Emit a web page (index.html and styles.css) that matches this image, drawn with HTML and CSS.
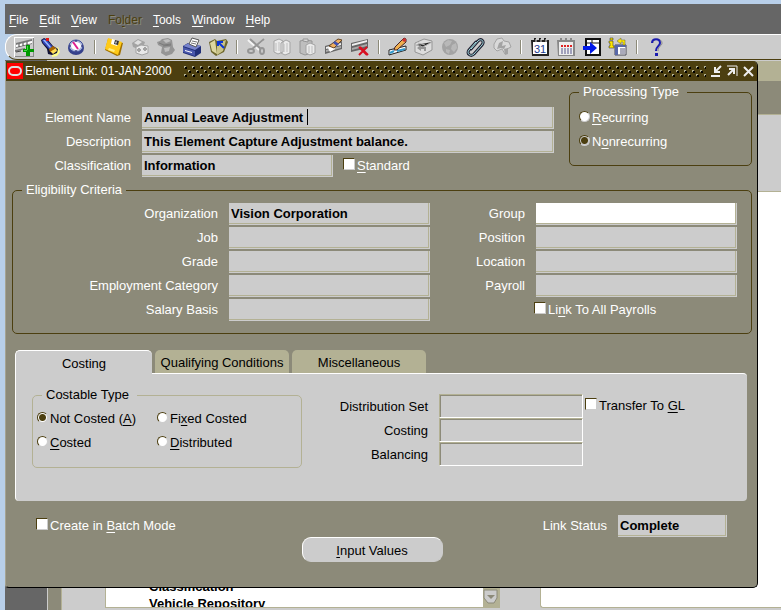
FILE: index.html
```html
<!DOCTYPE html>
<html lang="en">
<head>
<meta charset="utf-8">
<title>Element Link</title>
<link rel="stylesheet" href="styles.css">
</head>
<body>
<div class="app">
  <nav class="menubar">
    <a href="#"><u>F</u>ile</a>
    <a href="#"><u>E</u>dit</a>
    <a href="#"><u>V</u>iew</a>
    <a href="#" class="disabled">Fo<u>l</u>der</a>
    <a href="#"><u>T</u>ools</a>
    <a href="#"><u>W</u>indow</a>
    <a href="#"><u>H</u>elp</a>
  </nav>

  <div class="toolbar">
    <button type="button" aria-label="New" class="raised"><svg viewBox="0 0 20 20"><path fill="#777" d="M2 6 18 2v2L2 8zM2 10l16-4v1L2 11zM1 13l10-2v1L1 15z"/><path fill="#fff" d="M2 8 18 4v2L2 10z"/><path stroke="#444" fill="none" d="M5 7v3M9 6v3M13 5v3M2 15l5-1"/><path fill="#090" d="M12 8h4v4h4v3h-4v4h-4v-4H9v-3h3z"/><path fill="#4d4" d="M13 9h1v4h-4v1h3z"/></svg></button>
    <button type="button" aria-label="Find"><svg viewBox="0 0 20 20"><path fill="#ffff8a" d="M12 15l6-5 2 5-3 4-5 1z"/><path fill="#113" d="M1 3l3-2 4 2 5 6 5 3-1 4-5 2-4-1-1-5-5-6z"/><path fill="#3648b8" d="M2 3l2-1 3 1 6 7-3 3-7-7z"/><path fill="#9bf" d="M3 3h2l6 7-1 1z"/><path fill="#e01818" d="M6 1h3v3H6z"/><path fill="#fd5" d="M10 14l6-3 1 3-4 3z"/><path fill="#a60" d="M9 12l4-3 3 2-6 4z"/></svg></button>
    <button type="button" aria-label="Navigator"><svg viewBox="0 0 20 20"><ellipse cx="10" cy="11" rx="8" ry="7" fill="#35408a"/><ellipse cx="10" cy="9" rx="7" ry="6" fill="#a9b4d8" stroke="#3a4a9a"/><ellipse cx="10" cy="9" rx="5" ry="4" fill="#fff"/><path d="M7 5l5 7" stroke="#e02090" stroke-width="2"/><path d="M3 9h2M15 9h2M10 3v2M10 13v2" stroke="#226"/></svg></button>
    <span class="sep"></span>
    <button type="button" aria-label="Save"><svg viewBox="0 0 20 20"><path fill="#a07000" d="M4 2l15 4-3 12-3 1L1 13z"/><path fill="#ffca18" d="M4 1l14 4-4 13L1 12z"/><path fill="#fff" d="M8 2l7 2-2 5-6-2z"/><path fill="#333" d="M11 3l4 1-1 4-4-1z"/><path fill="#ccc" d="M12 4l1 1-1 2-1-1z"/><path fill="#ffed80" d="M5 11l6 2-1 2-6-2z"/></svg></button>
    <button type="button" aria-label="Next step" disabled><svg viewBox="0 0 20 20"><path fill="#999" d="M2 6l6-4 7 3-1 3-6 4-5-2z"/><path fill="#e4e4e4" d="M4 6l4-3 4 2-4 3z"/><path fill="#f0f0f0" stroke="#999" d="M6 10l5-2 7 1v7l-6 2-6-2z"/><path stroke="#999" stroke-width="2" d="M9 11v4M7 13h4M15 10v4M13 12h4"/></svg></button>
    <button type="button" aria-label="Switch responsibility" disabled><svg viewBox="0 0 20 20"><path fill="#888" d="M1 5l3-1 2-2 6-1 4 2 1 7 2 3-3 4-6 2-5-3 1-6-4-2z"/><path fill="#bbb" d="M7 3l5-1 3 2-5 2zM8 11l6-1-1 4-4 1z"/><path stroke="#666" fill="none" d="M3 6l5 2 7-1M7 9l8-1"/></svg></button>
    <button type="button" aria-label="Print"><svg viewBox="0 0 20 20"><path fill="#223078" d="M1 9l5-3 13 3v7l-6 4L1 16z"/><path fill="#7884cc" d="M1 9l6-3 12 3-6 4z"/><path fill="#4a58ac" d="M1 10l12 4v5L1 15z"/><path fill="#fff" stroke="#555" d="M7 7l3-6 7 2-3 7z"/><path d="M10 4l5 1M9 6l5 1" stroke="#777"/><path fill="#fff" d="M3 13l7 2v1l-7-2z"/></svg></button>
    <button type="button" aria-label="Close form"><svg viewBox="0 0 20 20"><path fill="#6d662c" d="M1 5l6-3 2 2 9-2 2 3-4 10-8 4-5-4z"/><path fill="#ddd7a0" d="M2 6l5-3 2 14-5-3z"/><path fill="#c9c38a" d="M9 6l9-3-3 11-6 4z"/><path stroke="#0b35d5" stroke-width="2" fill="none" d="M16 11l-5-5M10 9V5h5"/></svg></button>
    <span class="sep"></span>
    <button type="button" aria-label="Cut" disabled><svg viewBox="0 0 20 20"><path stroke="#fff" stroke-width="2" fill="none" d="M2 3l11 10M17 3L6 12"/><path stroke="#888" stroke-width="2" fill="none" d="M4 2l11 10M18 2L6 12"/><g fill="none" stroke="#888" stroke-width="2"><ellipse cx="5" cy="14" rx="3" ry="2"/><ellipse cx="16" cy="14" rx="2" ry="3"/></g></svg></button>
    <button type="button" aria-label="Copy" disabled><svg viewBox="0 0 20 20"><path fill="#f2f2f2" stroke="#999" d="M2 4l5-2 4 2v11l-5 2-4-2zM9 6l5-3 4 2v11l-5 2-4-2z"/><path stroke="#bbb" d="M4 6v8M7 5v9M12 7v8M15 6v9"/></svg></button>
    <button type="button" aria-label="Paste" disabled><svg viewBox="0 0 20 20"><path fill="#bbb" stroke="#888" d="M2 4l5-1 7 1v12l-7 2-5-2z"/><path fill="#ddd" stroke="#888" d="M5 4V2h5v3z"/><path fill="#f2f2f2" stroke="#999" d="M8 8l4-2 5 2v8l-5 2-4-2z"/><path stroke="#bbb" d="M11 9v7M14 9v7"/></svg></button>
    <button type="button" aria-label="Clear record"><svg viewBox="0 0 20 20"><path fill="#666" d="M1 9L18 4v8L1 17z"/><path fill="#eee" d="M2 10l15-4v2L2 12z"/><path fill="#aaa" d="M2 13l15-4v2L2 15z"/><path fill="#fff" d="M4 11l5-2 2 3-5 3z"/><path fill="#f0b060" stroke="#642" d="M5 9l9-7 4 1-8 8z"/><path fill="#4050b0" d="M9 6l4 3 2-2-4-3z"/></svg></button>
    <button type="button" aria-label="Delete record"><svg viewBox="0 0 20 20"><path fill="#666" d="M1 6L18 2v9L1 15z"/><path fill="#eee" d="M2 7l15-4v2L2 9z"/><path fill="#aaa" d="M2 11l15-4v2L2 13z"/><path stroke="#d81020" stroke-width="2" d="M9 10l8 8M17 10l-8 8M10 10l8 8"/></svg></button>
    <span class="sep"></span>
    <button type="button" aria-label="Edit field"><svg viewBox="0 0 20 20"><path fill="#fff" stroke="#222" d="M1 13l17-4v4L1 18z"/><path stroke="#39c" stroke-width="2" d="M2 16l4-2M9 14l8-2"/><path fill="#f0b050" stroke="#422" d="M6 13l1-3 9-9 2 1v3l-9 8z"/><path fill="#c33" d="M14 3l2-2 2 1v2l-2 1z"/></svg></button>
    <button type="button" aria-label="Zoom" disabled><svg viewBox="0 0 20 20"><path fill="#e2e2e2" stroke="#888" d="M1 6l9-4 8 2v9l-9 5-8-3z"/><path stroke="#aaa" d="M2 8l7 2 9-5M4 6l7 2"/><path fill="#888" d="M3 11l4-3v2h5v4h-2v-2H7v2z"/></svg></button>
    <button type="button" aria-label="Translations" disabled><svg viewBox="0 0 20 20"><circle cx="10" cy="10" r="8" fill="#999"/><path fill="#b4b4b4" d="M4 6l4-3 4 1-2 4-4 2zM12 8l4-2 1 5-3 4-3-3zM6 12l4 1-1 4-3-2z"/></svg></button>
    <button type="button" aria-label="Attachments"><svg viewBox="0 0 20 20"><path fill="none" stroke="#223" stroke-width="3" stroke-linecap="round" d="M5 12l7-8c3-3 7 0 4 4l-8 9c-3 3-8 0-5-4l7-8"/><path fill="none" stroke="#a4dce0" d="M5 12l7-8c3-3 7 0 4 4l-8 9c-3 3-8 0-5-4l7-8"/></svg></button>
    <button type="button" aria-label="Folder tools" disabled><svg viewBox="0 0 20 20"><path fill="#ddd" stroke="#999" d="M2 7l3-5 5-1 2 3 5 1 2 5-4 2-2 5-3-5-5 2-3-3z"/><path fill="#999" d="M7 6l4-2-1 5 4-1-2 4-3-1-4 1zM12 12l4-1v6l-3 1z"/></svg></button>
    <span class="sep"></span>
    <button type="button" aria-label="Calendar"><svg viewBox="0 0 20 20"><path fill="#222" d="M1 3h18v16H2z"/><path fill="#fff" d="M3 5h14v12H3z"/><path fill="none" stroke="#222" stroke-width="2" d="M5 1v4M10 1v4M15 1v4"/><path fill="none" stroke="#ddd" d="M6 2v3M11 2v3M16 2v3"/><text x="4" y="16" class="day">31</text></svg></button>
    <button type="button" aria-label="Schedule"><svg viewBox="0 0 20 20"><path fill="#888" d="M1 3h18v16H2z"/><path fill="#eee" d="M3 5h14v13H3z"/><path fill="none" stroke="#888" stroke-width="2" d="M5 1v4M10 1v4M15 1v4"/><path stroke="#d22" stroke-width="2" stroke-dasharray="2 1" d="M5 9h11"/><path stroke="#558" stroke-dasharray="2 1" d="M5 12h11M5 14h11M5 16h11"/></svg></button>
    <button type="button" aria-label="Export"><svg viewBox="0 0 20 20"><path fill="#fff" stroke="#111" stroke-width="2" d="M4 2h14v16H4z"/><path stroke="#111" d="M4 6h14M10 2v4"/><path fill="#0018e8" d="M1 9h7V5l7 6-7 6v-4H1z"/></svg></button>
    <button type="button" aria-label="Personal actions"><svg viewBox="0 0 20 20"><path fill="#fff" stroke="#445" d="M7 8h11v10H7z"/><path fill="#5868a8" d="M7 8h11v2H7zM7 10h3v8H7z"/><path stroke="#557" d="M12 12h5M12 14h5M12 16h5"/><path fill="#ffe800" stroke="#222" stroke-width=".5" d="M2 1h3v2H2zM1 4h4v5h1v2H1V9h1V6H1z"/><path fill="#ffe800" stroke="#663" stroke-width=".5" d="M9 4l4-3v2h4v5h-2V5h-2v2z"/></svg></button>
    <span class="sep"></span>
    <button type="button" aria-label="Help"><svg viewBox="0 0 20 20"><path fill="none" stroke="#888" d="M7 6c0-5 9-5 9 0 0 3-4 3-4 8"/><path fill="none" stroke="#1c1cb0" stroke-width="2" d="M6 6c0-5 8-5 8 0 0 3-4 3-4 8"/><path fill="#1c1cb0" d="M9 16h3v3H9z"/></svg></button>
  </div>

  <main class="desktop">
    <section class="behind" aria-label="Background form">
      <div class="behind-title"></div>
      <div class="behind-band"></div>
      <div class="behind-head"></div>
      <div class="behind-body">
        <div class="list"><ul><li>Classification</li><li>Vehicle Repository</li></ul>
          <button type="button" class="scroll" aria-label="Scroll down"><svg viewBox="0 0 16 20"><path fill="#ccc" stroke="#8c8a79" d="M1 3h13v8l-3 5H5l-4-5z"/><path fill="#8c8a79" d="M4 8h8l-4 4z"/></svg></button>
        </div>
        <div class="page"></div>
      </div>
    </section>

    <form class="dialog">
      <header class="titlebar">
        <svg class="logo" viewBox="0 0 16 16"><path fill="#f00" d="M0 0h16v16H0z"/><rect x="2" y="4" width="12" height="8" rx="4" fill="none" stroke="#ddd" stroke-width="2"/></svg>
        <h1>Element Link: 01-JAN-2000</h1>
        <svg class="grip"><defs><pattern id="dots" width="8" height="8" patternUnits="userSpaceOnUse"><path fill="#000" d="M1 1h2v2H1zM5 5h2v2H5z"/><path fill="#b3b194" d="M0 0h2v1H1v1H0zM4 4h2v1H5v1H4z"/></pattern></defs><rect width="100%" height="12" fill="url(#dots)"/></svg>
        <button type="button" aria-label="Minimize"><svg viewBox="0 0 12 12"><path fill="none" stroke="#eee" stroke-width="2" d="M1 11h9M11 1L6 6M5 2v5h5"/></svg></button>
        <button type="button" aria-label="Restore"><svg viewBox="0 0 12 12"><path fill="none" stroke="#eee" stroke-width="1" d="M1 1h10v10"/><path fill="none" stroke="#eee" stroke-width="2" d="M2 10l5-5M3 4h5v5"/></svg></button>
        <button type="button" aria-label="Close"><svg viewBox="0 0 12 12"><path stroke="#eee" stroke-width="2" d="M2 2l9 9M11 2l-9 9"/></svg></button>
      </header>

      <div class="content">
        <div class="top">
          <div class="form main-form">
            <label for="name">Element Name</label>
            <div class="editing"><input type="text" id="name" value="Annual Leave Adjustment"><i class="caret"></i></div>
            <label for="desc">Description</label>
            <input type="text" id="desc" value="This Element Capture Adjustment balance.">
            <label for="class">Classification</label>
            <div class="pair">
              <input type="text" id="class" value="Information">
              <label class="check"><input type="checkbox"><span><u>S</u>tandard</span></label>
            </div>
          </div>
          <fieldset class="processing">
            <legend>Processing Type</legend>
            <label class="check"><input type="radio" name="ptype"><span><u>R</u>ecurring</span></label>
            <label class="check"><input type="radio" name="ptype" checked><span>N<u>o</u>nrecurring</span></label>
          </fieldset>
        </div>

        <fieldset class="eligibility">
          <legend>Eligibility Criteria</legend>
          <div class="form left">
            <label for="org">Organization</label><input type="text" id="org" value="Vision Corporation">
            <label for="job">Job</label><input type="text" id="job">
            <label for="grade">Grade</label><input type="text" id="grade">
            <label for="cat">Employment Category</label><input type="text" id="cat">
            <label for="basis">Salary Basis</label><input type="text" id="basis">
          </div>
          <div class="form right">
            <label for="group">Group</label><input type="text" id="group" class="enabled">
            <label for="pos">Position</label><input type="text" id="pos">
            <label for="loc">Location</label><input type="text" id="loc">
            <label for="pay">Payroll</label><input type="text" id="pay">
            <label class="check wide"><input type="checkbox"><span>Li<u>n</u>k To All Payrolls</span></label>
          </div>
        </fieldset>

        <div class="tabs" role="tablist">
          <button type="button" role="tab" aria-selected="true">Costing</button>
          <button type="button" role="tab" aria-selected="false">Qualifying Conditions</button>
          <button type="button" role="tab" aria-selected="false">Miscellaneous</button>
        </div>
        <div class="panel" role="tabpanel">
          <fieldset class="costable">
            <legend>Costable Type</legend>
            <label class="check"><input type="radio" name="ctype" checked><span>Not Costed (<u>A</u>)</span></label>
            <label class="check"><input type="radio" name="ctype"><span>Fi<u>x</u>ed Costed</span></label>
            <label class="check"><input type="radio" name="ctype"><span><u>C</u>osted</span></label>
            <label class="check"><input type="radio" name="ctype"><span><u>D</u>istributed</span></label>
          </fieldset>
          <div class="form costs">
            <label for="dist">Distribution Set</label><input type="text" id="dist">
            <label for="cost">Costing</label><input type="text" id="cost">
            <label for="bal">Balancing</label><input type="text" id="bal">
          </div>
          <label class="check transfer"><input type="checkbox"><span>Transfer To <u>G</u>L</span></label>
        </div>

        <div class="status">
          <label class="check"><input type="checkbox"><span>Create in <u>B</u>atch Mode</span></label>
          <div class="form link"><label for="status">Link Status</label><input type="text" id="status" value="Complete"></div>
        </div>
        <div class="actions"><button type="button"><u>I</u>nput Values</button></div>
      </div>
    </form>
  </main>
</div>
</body>
</html>
```
FILE: styles.css
```css
:root {
  --olive: #8c8a79;
  --tan: #b3b194;
  --brown: #4c3f10;
  --gray: #ccc;
}
* { box-sizing: border-box; }
body {
  margin: 0;
  background: #b8cfe9;
  font: 13px/16px "Liberation Sans", Arial, sans-serif;
  color: #fff;
}
button, input { font: inherit; color: inherit; margin: 0; }
button { padding: 0; border: 0; background: none; }
svg { display: block; }
u { text-underline-offset: 2px; }

.app {
  display: flex;
  flex-direction: column;
  min-height: 100vh;
  padding: 4px 0 0 5px;
}

.menubar {
  display: flex;
  gap: 11px;
  height: 30px;
  padding: 8px 4px 0;
  background: #666;
  font-size: 12px;
}
.menubar a { color: #fff; text-decoration: none; }
.menubar .disabled { color: var(--brown); text-shadow: 1px 1px 0 var(--olive); }

.toolbar {
  display: flex;
  align-items: center;
  gap: 6px;
  height: 26px;
  padding-left: 8px;
  background: var(--gray);
  border-top: 1px solid #fff;
  border-bottom: 1px solid var(--brown);
  border-left: 1px solid #fff;
  border-radius: 12px 0 0 12px;
}
.toolbar button, .toolbar svg { width: 20px; height: 20px; }
.toolbar button:disabled { opacity: 0.8; }
.toolbar .raised { box-shadow: inset 1px 1px 0 #fff, inset -1px -1px 0 #888; }
.toolbar .day { font: 11px "Liberation Sans", Arial, sans-serif; fill: #1c3c90; }
.sep {
  width: 6px;
  height: 14px;
  background: linear-gradient(90deg, transparent 2px, var(--olive) 2px 3px, #fff 3px 4px, transparent 4px);
}

.desktop {
  position: relative;
  display: flex;
  flex: 1;
  min-height: 550px;
  background: #666;
}
.behind {
  display: flex;
  flex-direction: column;
  flex: 1;
  margin-left: 42px;
  border-top: 1px solid var(--gray);
  background: var(--gray);
  border-left: 1px solid var(--gray);
}
.behind-title { height: 20px; background: var(--tan); }
.behind-band { height: 34px; background: var(--olive); border-bottom: 1px solid var(--tan); }
.behind-head { height: 76px; }
.behind-body {
  display: flex;
  flex: 1;
  justify-content: space-between;
  padding: 0 0 2px 44px;
  border-left: 13px solid var(--olive);
  box-shadow: inset 1px 0 0 var(--tan);
}
.list {
  display: flex;
  align-items: flex-end;
  width: 395px;
  overflow: hidden;
  background: #fff;
  border: 1px solid var(--tan);
  color: #000;
  font-weight: bold;
}
.list ul { flex: 1; height: 27px; margin: 0; padding: 0 0 0 43px; list-style: none; }
.list li { height: 18px; margin-top: -1px; }
.scroll { width: 16px; height: 20px; background: var(--tan); }
.page { width: 241px; background: #fff; border: 1px solid var(--tan); border-right: 0; border-radius: 0 0 0 3px; }

.dialog {
  position: absolute;
  inset: 1px 23px 22px 0;
  display: flex;
  flex-direction: column;
  overflow: hidden;
  background: var(--olive);
  border: 1px solid #000;
  border-width: 0 1px 1px;
  border-left-color: #a5a392;
  border-radius: 0 5px 5px 4px;
}
.titlebar {
  display: flex;
  align-items: center;
  gap: 4px;
  height: 20px;
  padding: 0 3px 0 1px;
  background: var(--brown);
}
.titlebar .logo { width: 16px; height: 16px; }
.titlebar h1 { margin: 0 8px 0 -2px; font-size: 12px; font-weight: normal; }
.titlebar .grip { flex: 1; width: 0; height: 11px; }
.titlebar button, .titlebar button svg { width: 12px; height: 12px; }
.content { padding: 3px 5px 0 6px; }

input[type="text"] {
  width: 100%;
  min-width: 0;
  height: 22px;
  padding: 0 2px 2px;
  border: 0;
  border-radius: 0;
  outline: 0;
  background: var(--gray);
  color: #000;
  font-weight: bold;
  box-shadow: inset -1px -1px 0 var(--gray), inset -2px -2px 0 var(--tan);
}
input.enabled { background: #fff; }

.form {
  display: grid;
  grid-auto-rows: 22px;
  gap: 2px 11px;
  align-items: center;
}
.form > label:not(.check) { text-align: right; }

.check { display: flex; align-items: center; gap: 2px; }
.check span { white-space: nowrap; }
.check input {
  appearance: none;
  flex: none;
  width: 12px;
  height: 12px;
  margin-bottom: 4px;
  background: #fff;
  border: 1px solid var(--brown);
  border-right-color: var(--gray);
  border-bottom-color: var(--gray);
}
.check input[type="radio"] { width: 11px; height: 11px; border-radius: 50%; }
.check input[type="radio"]:checked { background: radial-gradient(circle, var(--brown) 3px, #fff 4px); }
.processing input[type="radio"]:checked { background: radial-gradient(circle, var(--brown) 3px, var(--gray) 4px); }

fieldset {
  margin: 0;
  min-width: 0;
  border: 1px solid var(--brown);
  border-radius: 5px;
}
legend { padding: 0 8px 0 4px; line-height: 16px; }

.top { display: flex; gap: 15px; }
.main-form { flex: 1; grid-template-columns: 119px 1fr; padding-top: 23px; }
.editing { position: relative; height: 22px; }
.caret { position: absolute; left: 165px; top: 2px; width: 1px; height: 16px; background: #000; }
.pair { display: flex; gap: 10px; }
.pair input[type="text"] { width: 191px; }
.processing { width: 183px; height: 82px; padding: 6px 9px; }
.processing .check { height: 24px; }

.eligibility {
  display: grid;
  grid-template-columns: 417px 261px;
  justify-content: space-between;
  margin-top: 5px;
  padding: 5px 14px 12px 0;
}
.eligibility legend { margin-left: 9px; padding-right: 4px; }
.left { grid-template-columns: 205px 1fr; }
.right { grid-template-columns: 49px 1fr; }
.wide { grid-column: 2; margin-left: -2px; }

.tabs { display: flex; gap: 3px; height: 23px; margin: 16px 3px 0; }
.tabs button {
  width: 134px;
  padding-top: 3px;
  background: var(--tan);
  border-radius: 5px 5px 0 0;
  color: #000;
}
.tabs [aria-selected="true"] {
  z-index: 1;
  width: 137px;
  height: 24px;
  background: var(--gray);
  border: 1px solid #fff;
  border-width: 1px 0 0 1px;
}
.panel {
  display: flex;
  align-items: flex-start;
  margin: 0 5px 0 3px;
  padding: 13px 16px 33px;
  background: var(--gray);
  border: 1px solid #fff;
  border-width: 1px 0 0 1px;
  border-radius: 0 4px 4px 4px;
  color: #000;
}
.costable {
  display: grid;
  grid-template-columns: 120px 1fr;
  grid-auto-rows: 24px;
  width: 270px;
  height: 81px;
  padding: 4px 4px 0;
  border-color: var(--tan);
}
.costable legend { margin-left: 5px; }
.costs { grid-template-columns: 1fr 144px; grid-auto-rows: 24px; row-gap: 0; width: 281px; padding-top: 7px; }
.costs label { padding-top: 2px; }
.costs input[type="text"] {
  height: 24px;
  border: 1px solid #fff;
  border-top-color: var(--tan);
  border-left-color: var(--tan);
  box-shadow: inset 1px 1px 0 var(--olive);
}
.transfer { margin: 11px 0 0 2px; }

.status { display: flex; justify-content: space-between; margin: 14px 25px 0 24px; }
.link { grid-template-columns: auto 109px; }
.actions { display: flex; justify-content: center; padding-right: 20px; }
.actions button {
  width: 141px;
  height: 25px;
  padding-top: 2px;
  background: var(--gray);
  border: 1px solid #fff;
  border-right-color: var(--gray);
  border-bottom-color: var(--gray);
  border-radius: 9px;
  color: #000;
}
```
